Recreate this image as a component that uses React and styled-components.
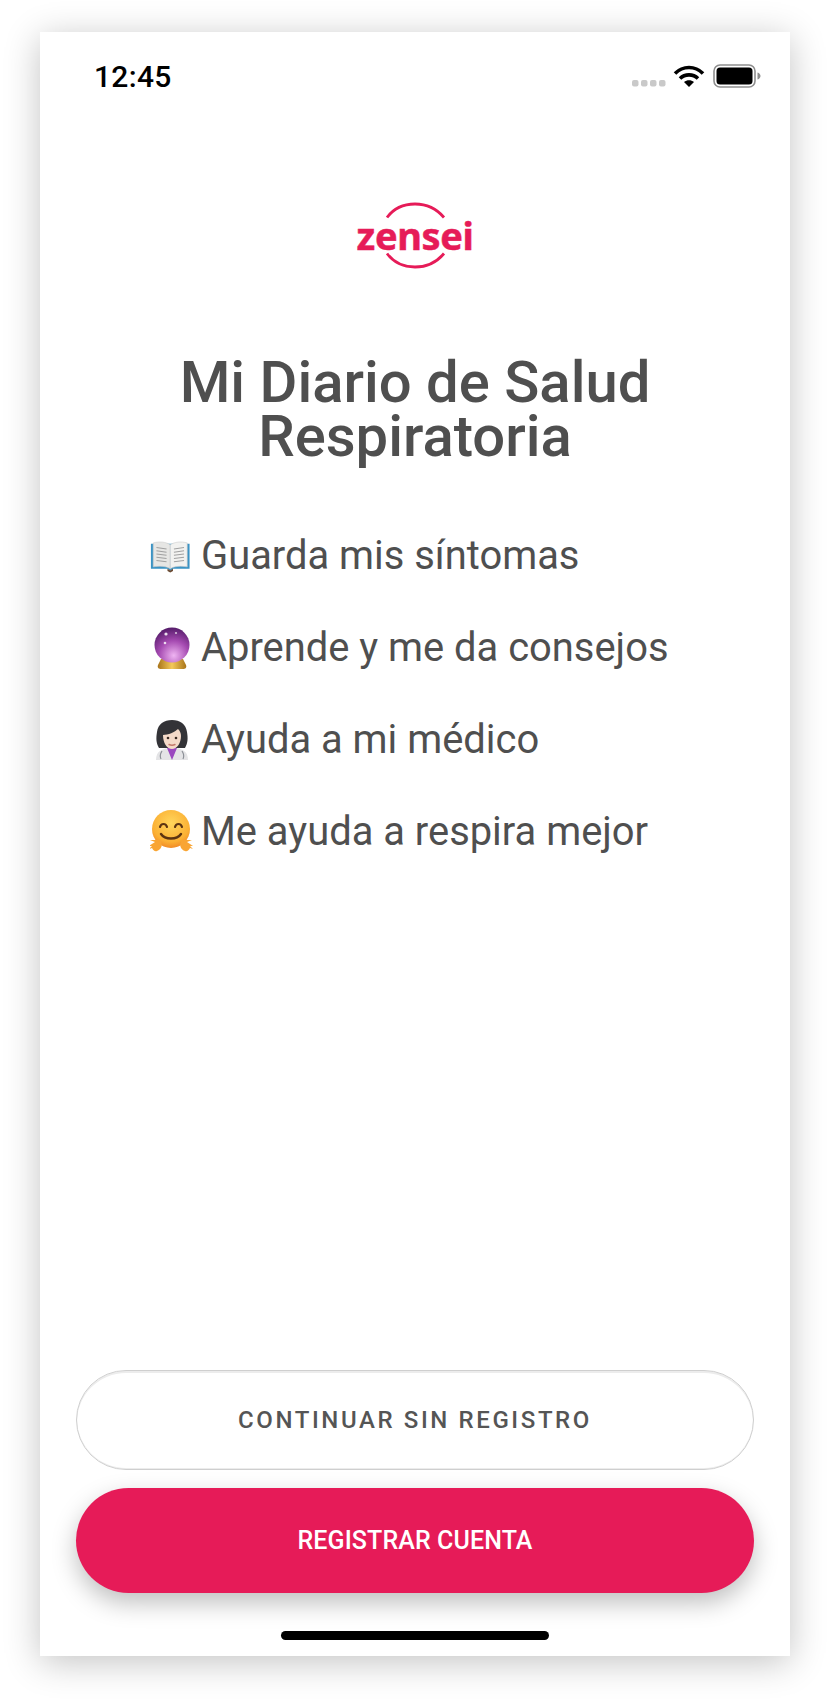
import React from "react";
import styled, { createGlobalStyle } from "styled-components";

const Global = createGlobalStyle`
  html, body { margin: 0; padding: 0; background: #fff; }
  body { font-family: Roboto, "Liberation Sans", sans-serif; }
`;
const Page = styled.div`
  width: 830px; height: 1704px; box-sizing: border-box; padding: 32px 40px 48px; overflow: hidden;
`;
const Phone = styled.main`
  width: 750px; height: 1624px; background: #fff; display: flex; flex-direction: column;
  box-shadow: 0 6px 34px rgba(0,0,0,.24);
`;
const StatusBar = styled.header`
  height: 56px; padding: 0 29px 0 54px; margin-top: 20px; display: flex; align-items: center; justify-content: space-between;
`;
const Time = styled.span`
  font: 500 30px/1 Roboto, sans-serif; color: #000; letter-spacing: .3px; margin-top: -6px;
`;
const StatusIcons = styled.div`display: flex; align-items: center; margin-top: -8px;`;
const Logo = styled.div`
  position: relative; width: 120px; height: 67px; margin: 94px auto 0; display: flex; align-items: center; justify-content: center;
`;
const LogoArc = styled.svg`position: absolute; inset: 0;`;
const LogoText = styled.span`
  position: relative; font: 700 38px/1 "Noto Sans", sans-serif; color: #e61b58; letter-spacing: -.4px; margin-top: -2px;
  -webkit-text-stroke: .5px #e61b58;
`;
const Title = styled.h1`
  margin: 86px 0 0; text-align: center; font: 500 58px/54px Roboto, sans-serif; color: #4f4f4f;
`;
const List = styled.ul`
  list-style: none; margin: 67px 0 0; padding: 0 0 0 110px; display: flex; flex-direction: column; gap: 40px;
`;
const Row = styled.li`
  height: 52px; display: flex; align-items: center; font: 400 39.9px/52px Roboto, sans-serif; color: #4f4f4f;
`;
const Emoji = styled.svg`width: 44px; height: 44px; margin-right: 7px; flex: none;`;
const Spacer = styled.div`flex: 1;`;
const Actions = styled.div`display: flex; flex-direction: column; align-items: center; gap: 18px;`;
const OutlineButton = styled.button`
  width: 678px; height: 100px; box-sizing: border-box; border-radius: 50px; background: #fff; border: 1.5px solid #cfcfcf;
  box-shadow: inset 0 2px 0 #ececec, inset 0 -1px 0 #ececec;
  font: 500 24px/1 Roboto, sans-serif; letter-spacing: 2.6px; color: #555;
`;
const PrimaryButton = styled.button`
  width: 678px; height: 105px; border: 0; border-radius: 53px; background: #e61b58;
  box-shadow: 0 10px 24px rgba(0,0,0,.25);
  font: 500 25px/1 Roboto, sans-serif; letter-spacing: .1px; color: #fff;
`;
const HomeBar = styled.div`
  width: 268px; height: 9px; border-radius: 5px; background: #000; margin: 38px auto 16px;
`;

const Book = () => (
  <Emoji viewBox="0 0 44 44">
    <g transform="translate(0 2.500) scale(.92)">
      <path d="M1 8h42v27H25l-3 2.500-3-2.500H1z" fill="#3a93c4" />
      <path d="M3.500 7c7-2 14-1 18.500 2v26c-5-3-12-3-18.500-2z" fill="#e6e6e4" stroke="#c9c9c9" strokeWidth=".6" />
      <path d="M40.500 7c-7-2-14-1-18.500 2v26c5-3 12-3 18.500-2z" fill="#f2f2f0" stroke="#c9c9c9" strokeWidth=".6" />
      <path d="M7 12l11 1.500M7 15.500l11 1.500M7 19l11 1.500M7 22.500l11 1.500M7 26l11 1.500M37 12l-11 1.500M37 15.500l-11 1.500M37 19l-11 1.500M37 22.500l-11 1.500M37 26l-11 1.500" stroke="#a0a0a0" strokeWidth="1.100" />
      <path d="M19 35l3 2 3-2v2.500l-3 1.500-3-1.500z" fill="#6b4a32" />
    </g>
  </Emoji>
);
const Ball = () => (
  <Emoji viewBox="0 0 44 44">
    <defs>
      <radialGradient id="ballG" cx=".55" cy=".8" r=".85">
        <stop offset="0" stopColor="#efb4f2" />
        <stop offset=".5" stopColor="#a54ab1" />
        <stop offset="1" stopColor="#4a1560" />
      </radialGradient>
      <linearGradient id="baseG" x1="0" x2="1">
        <stop offset="0" stopColor="#a8741a" />
        <stop offset=".5" stopColor="#f4c95a" />
        <stop offset="1" stopColor="#a8741a" />
      </linearGradient>
    </defs>
    <path d="M11 33h22l3 6c1 3-1 4-3 4H11c-2 0-4-1-3-4z" fill="url(#baseG)" />
    <circle cx="22" cy="19" r="17.500" fill="url(#ballG)" />
    <circle cx="16" cy="8" r="1.600" fill="#fff" opacity=".85" />
    <circle cx="26" cy="7" r="1.100" fill="#fff" opacity=".7" />
    <circle cx="15" cy="17" r="1.300" fill="#fff" opacity=".8" />
  </Emoji>
);
const Doctor = () => (
  <Emoji viewBox="0 0 44 44">
    <path d="M6 42c0-9 6-12 16-12s16 3 16 12z" fill="#e4e4e6" />
    <path d="M17 30h10l-5 12z" fill="#9a48bf" />
    <path d="M9 30c-3-5-3-10-2-16C8 6 14 2 22 2s14 4 15 12c1 6 1 11-2 16z" fill="#333337" />
    <path d="M13 17c5 0 12-3 15-6 2 2 3 4 3 7 0 7-4 13-9 13s-9-6-9-14z" fill="#f4d9c8" />
    <circle cx="18" cy="20" r="1.300" fill="#3a2a22" />
    <circle cx="26" cy="20" r="1.300" fill="#3a2a22" />
    <path d="M19 26.500c2 1 4 1 6 0" stroke="#c2776a" strokeWidth="1.400" fill="none" strokeLinecap="round" />
    <path d="M12 33c-2 3-2 6-1 8M32 33c2 3 2 6 1 8" stroke="#8b8f96" strokeWidth="1.200" fill="none" />
  </Emoji>
);
const Hug = () => (
  <Emoji viewBox="0 0 44 44">
    <defs>
      <radialGradient id="hugG" cx=".5" cy=".35" r=".7">
        <stop offset="0" stopColor="#ffd65c" />
        <stop offset=".7" stopColor="#fbb034" />
        <stop offset="1" stopColor="#ef7f22" />
      </radialGradient>
    </defs>
    <circle cx="21" cy="19" r="19" fill="url(#hugG)" />
    <path d="M10 17c1-4 6-4 7 0M25 17c1-4 6-4 7 0" stroke="#5c3411" strokeWidth="2.200" fill="none" strokeLinecap="round" />
    <path d="M11 24c4 6 16 6 20 0" stroke="#5c3411" strokeWidth="2.400" fill="none" strokeLinecap="round" />
    <path d="M-1 36l6-4-5-2 7 0 2-1 2 3c2 3 0 8-4 9-2 1-4-1-5-3l-3 1 3-3z" fill="#f9a533" />
    <path d="M43 36l-6-4 5-2-7 0-2-1-2 3c-2 3 0 8 4 9 2 1 4-1 5-3l3 1-3-3z" fill="#f9a533" />
  </Emoji>
);

const Signal = () => (
  <svg width="34" height="8" viewBox="0 0 34 8" style={{ marginTop: 13, marginRight: 7 }}>
    {[0, 9, 18, 27].map((x) => <rect key={x} x={x} y="1" width="6.500" height="6.500" rx="2" fill="#c9c9c9" />)}
  </svg>
);
const Wifi = () => (
  <svg width="32" height="24" viewBox="0 0 32 24" style={{ marginRight: 8 }}>
    <path d="M2 9.500C10 1.500 22 1.500 30 9.500M7 14.500c5-4.800 13-4.800 18 0" stroke="#000" strokeWidth="3.600" fill="none" />
    <path d="M16 23l-5-5c3-2.400 7-2.400 10 0z" fill="#000" />
  </svg>
);
const Battery = () => (
  <svg width="48" height="24" viewBox="0 0 48 24">
    <rect x="1" y="1" width="41" height="22" rx="6" fill="none" stroke="#8e8e8e" strokeWidth="1.600" />
    <rect x="3.500" y="3.500" width="36" height="17" rx="3.500" fill="#000" />
    <path d="M44.500 8.500c2 .6 3 2 3 3.500s-1 2.900-3 3.500z" fill="#8e8e8e" />
  </svg>
);

const items = [
  [Book, "Guarda mis síntomas"],
  [Ball, "Aprende y me da consejos"],
  [Doctor, "Ayuda a mi médico"],
  [Hug, "Me ayuda a respira mejor"],
];

export default function App() {
  return (
    <Page>
      <Global />
      <Phone>
        <StatusBar>
          <Time>12:45</Time>
          <StatusIcons><Signal /><Wifi /><Battery /></StatusIcons>
        </StatusBar>
        <Logo>
          <LogoArc viewBox="0 0 120 67" width="120" height="67">
            <path d="M32 15.500C39 6 49 2 60 2s21 4 29 13.500" stroke="#e61b58" strokeWidth="2.800" fill="none" />
            <path d="M32 51.500C39 61 49 65 60 65s21-4 29-13.500" stroke="#e61b58" strokeWidth="2.800" fill="none" />
          </LogoArc>
          <LogoText>zensei</LogoText>
        </Logo>
        <Title>Mi Diario de Salud<br />Respiratoria</Title>
        <List>
          {items.map(([Icon, text]) => (
            <Row key={text}><Icon />{text}</Row>
          ))}
        </List>
        <Spacer />
        <Actions>
          <OutlineButton>CONTINUAR SIN REGISTRO</OutlineButton>
          <PrimaryButton>REGISTRAR CUENTA</PrimaryButton>
        </Actions>
        <HomeBar />
      </Phone>
    </Page>
  );
}
